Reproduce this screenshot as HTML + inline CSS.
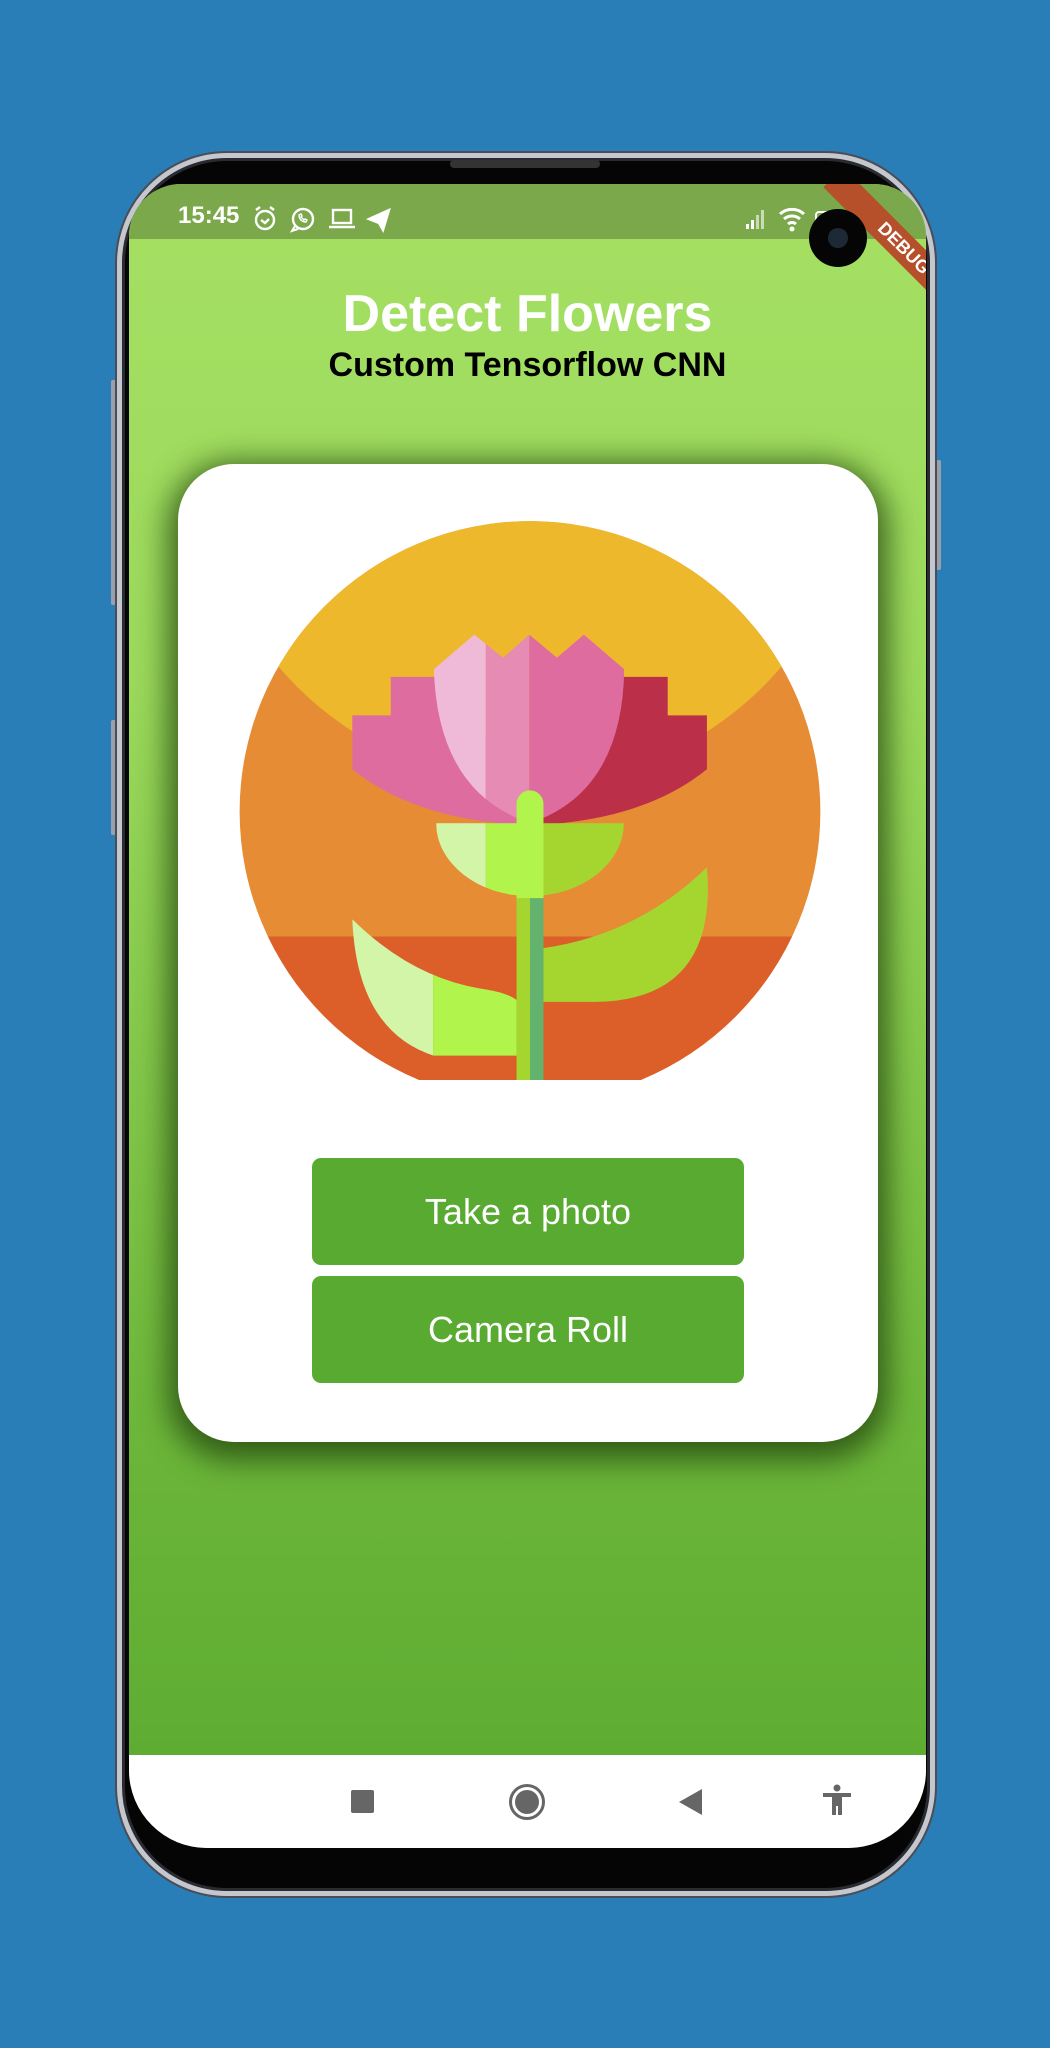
<!DOCTYPE html>
<html><head><meta charset="utf-8"><style>
*{margin:0;padding:0;box-sizing:border-box}
body{width:1050px;height:2048px;background:#2a7eb7;position:relative;overflow:hidden;font-family:"Liberation Sans",sans-serif}
.abs{position:absolute}
.frame{left:117px;top:153px;width:818px;height:1743px;border-radius:110px;background:#050505;border:5px solid #c4c7ce;box-shadow:0 0 0 2px #4a4d55, inset 0 0 0 3px #2a2b30}
.screen{left:129px;top:184px;width:797px;height:1664px;border-radius:52px 52px 78px 78px;overflow:hidden;background:linear-gradient(#a5e063 0%,#9bd95b 30%,#6cb63a 75%,#5aaa30 100%)}
.status{left:0;top:0;width:797px;height:55px;background:#7aa84a}
.btn{position:absolute;left:134px;width:432px;height:107px;background:#58aa30;border-radius:9px;color:#fff;font-size:36px;text-align:center;line-height:107px}
</style></head><body>
<div class="abs" style="left:111px;top:380px;width:5px;height:225px;background:#9aa0aa;border-radius:2px"></div>
<div class="abs" style="left:111px;top:720px;width:5px;height:115px;background:#9aa0aa;border-radius:2px"></div>
<div class="abs" style="left:936px;top:460px;width:5px;height:110px;background:#9aa0aa;border-radius:2px"></div>
<div class="abs frame"></div>
<div class="abs" style="left:450px;top:160px;width:150px;height:8px;background:#333;border-radius:4px"></div>
<div class="abs screen">
  <div class="abs status"></div>
  <div class="abs" style="left:49px;top:18px;color:#fff;font-size:24px;font-weight:bold">15:45</div>
  <svg class="abs" style="left:120px;top:20px" width="150" height="30" viewBox="0 0 150 30" fill="none" stroke="#fff" stroke-width="2.4">
    <circle cx="16" cy="16" r="9"/><path d="M12 16l4 3 4-4M7 6l4-3M25 6l-4-3"/>
    <circle cx="54" cy="15" r="10"/><path d="M46 22l-3 5 6-2" stroke-width="2"/><path d="M50 11c0 4 3 7 7 7l1-2-2-1-1 1c-1-1-2-2-3-3l1-1-1-2z" stroke-width="1.5"/>
    <rect x="84" y="6" width="18" height="13"/><path d="M80 23h26"/>
    <path d="M120 15l20-9-6 20-4-7z" fill="#fff"/>
  </svg>
  <svg class="abs" style="left:615px;top:20px" width="120" height="30" viewBox="0 0 120 30">
    <g fill="#fff"><rect x="2" y="20" width="3" height="5"/><rect x="7" y="16" width="3" height="9"/><rect x="12" y="11" width="3" height="14" opacity=".6"/><rect x="17" y="6" width="3" height="19" opacity=".6"/></g>
    <path d="M36 10a18 18 0 0 1 24 0M40 15a12 12 0 0 1 16 0M44 20a6 6 0 0 1 8 0" stroke="#fff" stroke-width="3" fill="none"/><circle cx="48" cy="25" r="2.5" fill="#fff"/>
    <rect x="72" y="8" width="26" height="14" rx="3" fill="none" stroke="#fff" stroke-width="2"/>
  </svg>
  <div class="abs" style="left:675px;top:50px;width:200px;height:28px;background:#b5502a;transform:rotate(45deg);color:#fff;font-size:18px;font-weight:bold;text-align:center;line-height:28px">DEBUG</div>
  <div class="abs" style="left:0;top:100px;width:797px;text-align:center;color:#fff;font-size:52px;font-weight:bold">Detect Flowers</div>
  <div class="abs" style="left:0;top:162px;width:797px;text-align:center;color:#000;font-size:34px;font-weight:bold">Custom Tensorflow CNN</div>
  <div class="abs" style="left:49px;top:280px;width:700px;height:978px;background:#fff;border-radius:56px;box-shadow:0 8px 30px 10px rgba(35,70,15,.8)">
    <div class="btn" style="top:694px">Take a photo</div>
    <div class="btn" style="top:812px">Camera Roll</div>
  </div>
  <div class="abs" style="left:0;top:1571px;width:797px;height:93px;background:#fff"></div>
  <div class="abs" style="left:222px;top:1606px;width:23px;height:23px;background:#666;border-radius:2px"></div>
  <div class="abs" style="left:380px;top:1600px;width:36px;height:36px;border:3px solid #666;border-radius:50%;padding:3px"><div style="width:24px;height:24px;background:#666;border-radius:50%"></div></div>
  <svg class="abs" style="left:550px;top:1605px" width="24" height="26"><path d="M0 13L23 0V26Z" fill="#666"/></svg>
  <svg class="abs" style="left:694px;top:1600px" width="28" height="32" viewBox="0 0 28 32" fill="#666"><circle cx="14" cy="4" r="3.5"/><rect x="0" y="9" width="28" height="4"/><rect x="9" y="9" width="10" height="13"/><rect x="9" y="20" width="4" height="11"/><rect x="15" y="20" width="4" height="11"/></svg>
  <div class="abs" style="left:680px;top:25px;width:58px;height:58px;border-radius:50%;background:#050505"><div style="margin:19px;width:20px;height:20px;border-radius:50%;background:#1d2a36"></div></div>
</div>
<svg class="abs" style="left:230px;top:500px" width="600" height="580" viewBox="0 0 1560 1508">
  <defs>
    <clipPath id="c"><circle cx="780" cy="810" r="755"/></clipPath>
    <clipPath id="tl"><path d="M530,440 L635,350 L710,410 L778,350 L850,410 L920,350 L1025,440 Q1020,760 780,840 Q540,760 530,440Z"/></clipPath>
    <clipPath id="cup"><path d="M536,840 H1024 A244 190 0 0 1 536,840Z"/></clipPath>
    <clipPath id="ll"><path d="M318,1090 Q470,1240 650,1270 Q720,1280 745,1300 V1445 H530 Q330,1380 318,1090Z"/></clipPath>
  </defs>
  <g clip-path="url(#c)">
    <rect x="0" y="0" width="1560" height="1560" fill="#e58c35"/>
    <circle cx="780" cy="-122" r="858" fill="#edb82c"/>
    <rect x="0" y="1135" width="1560" height="500" fill="#dc5f2a"/>
    <rect x="745" y="1035" width="35" height="525" fill="#a5d630"/>
    <rect x="780" y="1035" width="35" height="525" fill="#63b36e"/>
  </g>
  <path d="M318,560 H418 V460 H600 L760,845 Q480,830 318,700Z" fill="#de6c9e"/>
  <path d="M1240,560 H1138 V460 H960 L800,845 Q1080,830 1240,700Z" fill="#bb3048"/>
  <g clip-path="url(#tl)"><rect x="500" y="300" width="165" height="600" fill="#efb9d8"/><rect x="665" y="300" width="113" height="600" fill="#e68bb3"/><rect x="778" y="300" width="300" height="600" fill="#de6c9e"/></g>
  <g clip-path="url(#cup)"><rect x="500" y="830" width="165" height="250" fill="#d3f5a8"/><rect x="665" y="830" width="113" height="250" fill="#b0f44c"/><rect x="778" y="830" width="300" height="250" fill="#a5d630"/></g>
  <path d="M815,1165 Q1060,1130 1240,955 Q1270,1300 950,1305 H815Z" fill="#a5d630"/>
  <g clip-path="url(#ll)"><rect x="300" y="1080" width="228" height="400" fill="#d3f5a8"/><rect x="528" y="1080" width="230" height="400" fill="#b0f44c"/></g>
  <path d="M745,1035 V790 A35 35 0 0 1 815,790 V1035Z" fill="#b0f44c"/>
</svg>
</body></html>
